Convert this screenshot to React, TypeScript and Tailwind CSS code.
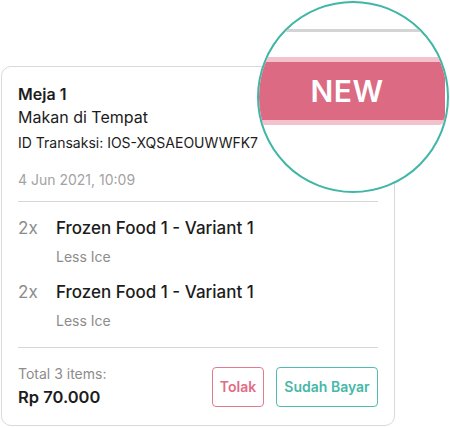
import * as React from 'react';

const items = [
  { qty: 2, name: 'Frozen Food 1 - Variant 1', note: 'Less Ice' },
  { qty: 2, name: 'Frozen Food 1 - Variant 1', note: 'Less Ice' },
];

export default function App() {
  return (
    <div className="relative w-[450px] h-[428px] bg-white font-['Inter',sans-serif] text-[#1c1c1c]">
      <div className="absolute left-[1px] top-[66px] w-[394px] h-[360px] rounded-[10px] border border-[#d9d9d9] bg-white px-[16px] pt-[16px]">
        <p className="text-[16px] font-semibold leading-[22px]">Meja 1</p>
        <p className="text-[16px] leading-[24px]">Makan di Tempat</p>
        <p className="mt-[4px] text-[14px] leading-[20px]">ID Transaksi: IOS-XQSAEOUWWFK7</p>
        <p className="mt-[17px] text-[14px] leading-[20px] text-[#a3a3a3]">4 Jun 2021, 10:09</p>
        <div className="mt-[11px] border-t border-[#d6d6d6]" />
        <div className="flex flex-col gap-[13px] pt-[14px] pb-[16px]">
          {items.map((it, i) => (
            <div key={i} className="flex">
              <span className="w-[38px] text-[17px] leading-[24px] text-[#8c8c8c]">{it.qty}x</span>
              <div>
                <p className="text-[17px] font-medium leading-[24px]">{it.name}</p>
                <p className="mt-[7px] text-[14px] leading-[20px] text-[#8c8c8c]">{it.note}</p>
              </div>
            </div>
          ))}
        </div>
        <div className="border-t border-[#d6d6d6]" />
        <div className="flex items-center justify-between pt-[17px]">
          <div>
            <p className="text-[14px] leading-[18px] text-[#8c8c8c]">Total 3 items:</p>
            <p className="mt-[3px] text-[16.5px] font-semibold leading-[22px]">Rp 70.000</p>
          </div>
          <div className="flex gap-[12px]">
            <button className="h-[40px] w-[52px] rounded-[4px] border border-[#e07b91] text-[14px] font-semibold text-[#df6d86]">Tolak</button>
            <button className="h-[40px] w-[102px] rounded-[4px] border border-[#4dbdaf] text-[14px] font-semibold text-[#46b8a8]">Sudah Bayar</button>
          </div>
        </div>
      </div>

      <div className="absolute left-[257px] top-[1px] h-[192px] w-[192px] overflow-hidden rounded-full border-2 border-[#3fb6a6] bg-white">
        <div className="absolute left-0 top-[26px] w-full border-t-[3px] border-[#d4d4d4]" />
        <div className="absolute left-0 top-[54px] flex h-[68px] w-[186px] items-center justify-center rounded-r-[6px] border-y-[5px] border-[#f2c3cd] bg-[#dc6a83] pr-[10px]">
          <span className="text-[30px] font-semibold leading-none tracking-[0.5px] text-white">NEW</span>
        </div>
      </div>
    </div>
  );
}
